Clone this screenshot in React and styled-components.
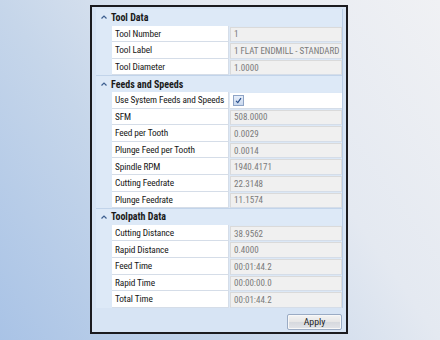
import React from 'react'
import styled, { createGlobalStyle } from 'styled-components'

const FONT = "'Liberation Sans Narrow', 'Roboto Condensed', 'DejaVu Sans Condensed', sans-serif"

const Global = createGlobalStyle`
    html, body {
        margin: 0;
        padding: 0;
    }
    body {
        font-family: ${FONT};
    }
`

const Page = styled.div`
    width: 440px;
    height: 340px;
    box-sizing: border-box;
    padding: 5px 0 0 90px;
    background: linear-gradient(55deg, #a9c3e6 0%, #c6d6ea 35%, #e4e9f1 65%, #f0f1f4 100%);
    overflow: hidden;
`

const Window = styled.div`
    width: 258px;
    height: 329px;
    box-sizing: border-box;
    border: 2px solid #1b1b1f;
    background: #d7e4f4;
    padding: 2px 3px 0 4px;
    display: flex;
    flex-direction: column;
`

const Grid = styled.div`
    display: flex;
    flex-direction: column;
    border-right: 1px solid #b9cde6;
    background: #dce8f6;
`

const Header = styled.div`
    height: 16.6px;
    display: flex;
    align-items: center;
    gap: 4px;
    padding-left: 5px;
    box-sizing: border-box;
    background: #dde9f7;
    border-top: ${p => (p.$first ? 'none' : '1px solid #c2d4ea')};
    font-size: 10px;
    font-weight: 700;
    color: #1a1a1a;
`

const Caret = styled.svg`
    width: 6px;
    height: 4px;
    flex: none;
`

const Row = styled.div`
    height: 16.6px;
    display: grid;
    grid-template-columns: 16px 117px 1fr;
    box-sizing: border-box;
`

const Indent = styled.div`
    background: #dde9f7;
`

const Label = styled.div`
    display: flex;
    align-items: center;
    padding-left: 3px;
    background: #fff;
    border-bottom: 1px solid #d5dde8;
    border-right: 1px solid #d5dde8;
    font-size: 9.3px;
    letter-spacing: -0.1px;
    color: #161616;
    white-space: nowrap;
    overflow: hidden;
`

const Value = styled.div`
    display: flex;
    align-items: center;
    padding-left: 3px;
    margin: 1px 0 0 1px;
    background: ${p => (p.$plain ? '#fff' : '#f0f0f0')};
    border: ${p => (p.$plain ? 'none' : '1px solid #dadada')};
    border-bottom: 1px solid #d5dde8;
    font-size: 9px;
    color: #7a7a7a;
    white-space: nowrap;
    overflow: hidden;
`

const Check = styled.div`
    width: 9px;
    height: 9px;
    border: 1px solid #8ea4c6;
    background: linear-gradient(#e6eefa, #c9d8ee);
    display: flex;
    align-items: center;
    justify-content: center;
`

const Footer = styled.div`
    flex: 1;
    display: flex;
    justify-content: flex-end;
    align-items: flex-start;
    padding: 6px 1px 0 0;
`

const Button = styled.button`
    width: 55px;
    height: 16px;
    padding: 0;
    border: 1px solid #9aabc4;
    border-radius: 2px;
    background: linear-gradient(#f4f4f4 0%, #e6e6e6 50%, #d6d9de 51%, #e2e4e8 100%);
    font-family: ${FONT};
    font-size: 9.8px;
    color: #1e1e1e;
    box-shadow: inset 0 0 0 1px #f8f8f8;
`

const sections = [
    {
        title: 'Tool Data',
        rows: [
            ['Tool Number', '1'],
            ['Tool Label', '1 FLAT ENDMILL - STANDARD'],
            ['Tool Diameter', '1.0000'],
        ],
    },
    {
        title: 'Feeds and Speeds',
        rows: [
            ['Use System Feeds and Speeds', 'check'],
            ['SFM', '508.0000'],
            ['Feed per Tooth', '0.0029'],
            ['Plunge Feed per Tooth', '0.0014'],
            ['Spindle RPM', '1940.4171'],
            ['Cutting Feedrate', '22.3148'],
            ['Plunge Feedrate', '11.1574'],
        ],
    },
    {
        title: 'Toolpath Data',
        rows: [
            ['Cutting Distance', '38.9562'],
            ['Rapid Distance', '0.4000'],
            ['Feed Time', '00:01:44.2'],
            ['Rapid Time', '00:00:00.0'],
            ['Total Time', '00:01:44.2'],
        ],
    },
]

const App = () => {
    return (
        <Page>
            <Global />
            <Window>
                <Grid>
                    {sections.map((s, i) => (
                        <React.Fragment key={s.title}>
                            <Header $first={i === 0}>
                                <Caret viewBox="0 0 6 4">
                                    <path d="M0.5 3.5 L3 1 L5.5 3.5" fill="none" stroke="#3d5f8f" strokeWidth="1.2" />
                                </Caret>
                                {s.title}
                            </Header>
                            {s.rows.map(([label, value]) => (
                                <Row key={label}>
                                    <Indent />
                                    <Label>{label}</Label>
                                    {value === 'check' ? (
                                        <Value $plain>
                                            <Check>
                                                <svg width="7" height="7" viewBox="0 0 7 7">
                                                    <path d="M1 3.8 L2.8 5.6 L6 1.2" fill="none" stroke="#2a4f8c" strokeWidth="1.2" />
                                                </svg>
                                            </Check>
                                        </Value>
                                    ) : (
                                        <Value>{value}</Value>
                                    )}
                                </Row>
                            ))}
                        </React.Fragment>
                    ))}
                </Grid>
                <Footer>
                    <Button>Apply</Button>
                </Footer>
            </Window>
        </Page>
    )
}

export default App
